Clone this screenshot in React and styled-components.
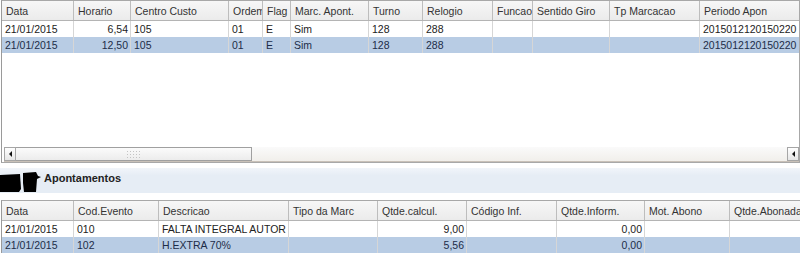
import React from 'react'
import styled, { createGlobalStyle } from 'styled-components';

const GlobalStyle = createGlobalStyle`
  html, body {
    margin: 0;
    padding: 0;
    background: #ffffff;
  }
  body {
    font-family: "Liberation Sans", Arial, sans-serif;
    font-size: 10.5px;
    color: #222;
  }
`;

const topCols = [
  { title: 'Data', w: 72 },
  { title: 'Horario', w: 57, right: true },
  { title: 'Centro Custo', w: 98 },
  { title: 'Ordem', w: 34 },
  { title: 'Flag', w: 28 },
  { title: 'Marc. Apont.', w: 78 },
  { title: 'Turno', w: 54 },
  { title: 'Relogio', w: 70 },
  { title: 'Funcao', w: 40 },
  { title: 'Sentido Giro', w: 77 },
  { title: 'Tp Marcacao', w: 90 },
  { title: 'Periodo Apon', w: 100 },
];

const topRows = [
  ['21/01/2015', '6,54', '105', '01', 'E', 'Sim', '128', '288', '', '', '', '2015012120150220'],
  ['21/01/2015', '12,50', '105', '01', 'E', 'Sim', '128', '288', '', '', '', '2015012120150220'],
];

const bottomCols = [
  { title: 'Data', w: 72 },
  { title: 'Cod.Evento', w: 85 },
  { title: 'Descricao', w: 130 },
  { title: 'Tipo da Marc', w: 89 },
  { title: 'Qtde.calcul.', w: 89, right: true },
  { title: 'Código Inf.', w: 90 },
  { title: 'Qtde.Inform.', w: 88, right: true },
  { title: 'Mot. Abono', w: 85 },
  { title: 'Qtde.Abonada', w: 80 },
];

const bottomRows = [
  ['21/01/2015', '010', 'FALTA INTEGRAL AUTOR', '', '9,00', '', '0,00', '', ''],
  ['21/01/2015', '102', 'H.EXTRA 70%', '', '5,56', '', '0,00', '', ''],
];

function Grid({ cols, rows }) {
  const template = cols.map(c => `${c.w}px`).join(' ');
  return (
    <>
      <HeaderRow $cols={template}>
        {cols.map(c => (
          <HeadCell key={c.title}>{c.title}</HeadCell>
        ))}
      </HeaderRow>
      {rows.map((r, i) => (
        <Row key={i} $cols={template} $selected={i === 1}>
          {r.map((v, j) => (
            <Cell key={j} $right={cols[j].right}>{v}</Cell>
          ))}
        </Row>
      ))}
    </>
  );
}

function App() {
  return (
    <Page>
      <GlobalStyle />
      <GridFrame>
        <Grid cols={topCols} rows={topRows} />
        <Filler />
        <HScroll>
          <ScrollButton><Arrow /></ScrollButton>
          <Thumb>
            <Grip />
          </Thumb>
          <Track />
          <ScrollButton><Arrow /></ScrollButton>
        </HScroll>
      </GridFrame>

      <SectionBar>
        <Redacted width="42" height="22" viewBox="0 0 42 22">
          <path d="M0 4 L20 3 L21 18 L19 21 L0 21 Z" fill="#000" />
          <path d="M23 2 L36 1 L38 5 L41 6 L37 8 L36 21 L24 21 L23 12 Z" fill="#000" />
        </Redacted>
        <SectionTitle>Apontamentos</SectionTitle>
      </SectionBar>

      <BottomFrame>
        <Grid cols={bottomCols} rows={bottomRows} />
      </BottomFrame>
    </Page>
  )
}

export default App

const Page = styled.div`
  display: flex;
  flex-direction: column;
  width: 800px;
  height: 253px;
  overflow: hidden;
`;

const GridFrame = styled.div`
  display: flex;
  flex-direction: column;
  height: 164px;
  box-sizing: border-box;
  border: 1px solid #a8a8a8;
  border-left: 1px solid #9a9a9a;
  margin-left: 1px;
  background: #fff;
  overflow: hidden;
`;

const BottomFrame = styled.div`
  display: flex;
  flex-direction: column;
  margin-top: 7px;
  border-top: 1px solid #a8a8a8;
  border-left: 1px solid #9a9a9a;
  margin-left: 1px;
  overflow: hidden;
`;

const HeaderRow = styled.div`
  display: grid;
  grid-template-columns: ${p => p.$cols};
  height: 19px;
  background: linear-gradient(#f7f7f7, #ebebeb);
  border-bottom: 1px solid #b4b4b4;
  flex-shrink: 0;
`;

const HeadCell = styled.div`
  display: flex;
  align-items: center;
  padding-left: 4px;
  border-right: 1px solid #bdbdbd;
  color: #333;
  white-space: nowrap;
  overflow: hidden;
`;

const Row = styled.div`
  display: grid;
  grid-template-columns: ${p => p.$cols};
  height: 16px;
  background: ${p => (p.$selected ? '#b8cce4' : '#ffffff')};
  color: ${p => (p.$selected ? '#1d2c48' : '#222')};
  flex-shrink: 0;
`;

const Cell = styled.div`
  display: flex;
  align-items: center;
  justify-content: ${p => (p.$right ? 'flex-end' : 'flex-start')};
  padding: 0 2px 0 3px;
  border-right: 1px solid #d6d6d6;
  white-space: nowrap;
  overflow: hidden;
`;

const Filler = styled.div`
  flex: 1;
`;

const HScroll = styled.div`
  display: flex;
  height: 14px;
  margin: 0 0 0 2px;
  background: #f4f2ee;
  border-bottom: 1px solid #c9c1b8;
`;

const ScrollButton = styled.div`
  width: 12px;
  display: flex;
  align-items: center;
  justify-content: center;
  box-sizing: border-box;
  border: 1px solid #a6a6a6;
  background: linear-gradient(#ffffff, #e6e6e6);
`;

const Arrow = styled.div`
  width: 0;
  height: 0;
  border-top: 3px solid transparent;
  border-bottom: 3px solid transparent;
  border-right: 3px solid #111;
`;

const Thumb = styled.div`
  width: 236px;
  display: flex;
  align-items: center;
  justify-content: center;
  box-sizing: border-box;
  border: 1px solid #a0a0a0;
  border-left: none;
  background: linear-gradient(#fbfbfb, #ececec);
`;

const Grip = styled.div`
  width: 16px;
  height: 8px;
  background-image: radial-gradient(#c4c4c4 0.7px, transparent 0.8px);
  background-size: 3px 3px;
`;

const Track = styled.div`
  flex: 1;
  background: linear-gradient(#fafafa, #f1efeb);
`;

const SectionBar = styled.div`
  display: flex;
  align-items: flex-start;
  height: 25px;
  margin-top: 5px;
  background: linear-gradient(#f1f5fa, #e6edf5 30%, #e6edf5);
`;

const Redacted = styled.svg`
  margin-top: 3px;
  flex-shrink: 0;
`;

const SectionTitle = styled.div`
  margin: 4px 0 0 2px;
  font-weight: 700;
  font-size: 11px;
  color: #222;
`;
